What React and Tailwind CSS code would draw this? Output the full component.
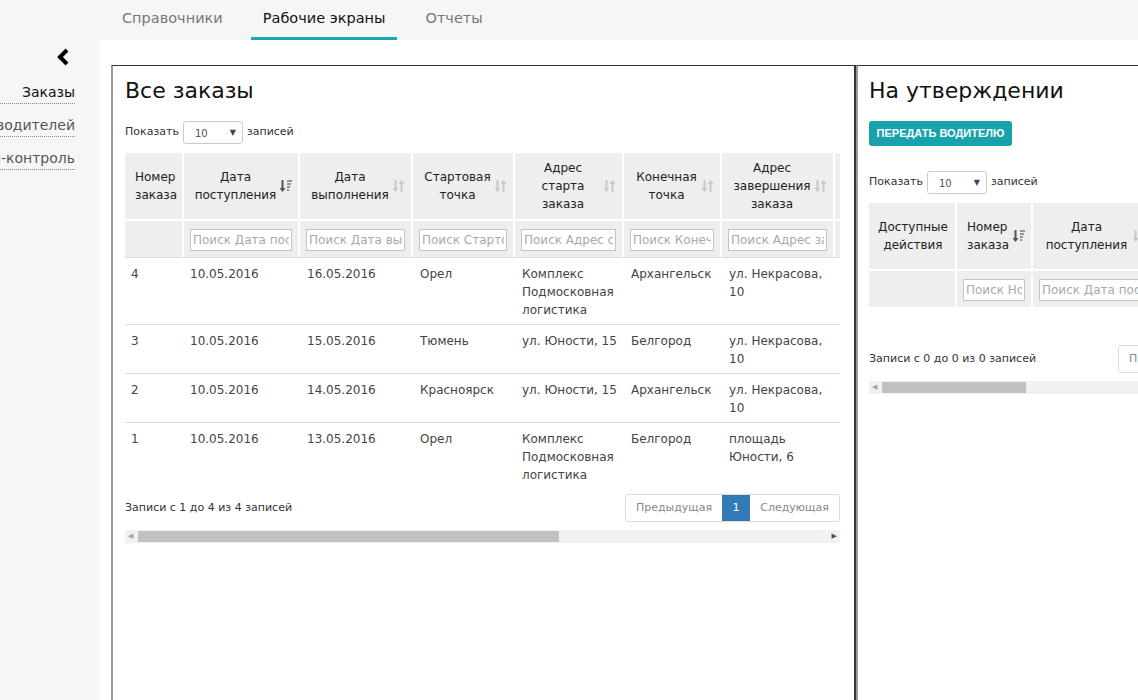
import {useState} from "react";

const SortIcon = ({active}) => {
    if (active) {
        return (
            <svg width="13" height="14" viewBox="0 0 13 14" className="shrink-0">
                <path d="M3.5 1v10.5" stroke="#555" strokeWidth="2"/>
                <path d="M0.5 9l3 4 3-4z" fill="#555"/>
                <path d="M8 2h5M8 5h4M8 8h3M8 11h2" stroke="#777" strokeWidth="1.6"/>
            </svg>
        );
    }
    return (
        <svg width="13" height="14" viewBox="0 0 13 14" className="shrink-0">
            <path d="M3.5 1v10" stroke="#c8c8c8" strokeWidth="2"/>
            <path d="M0.5 9l3 4 3-4z" fill="#c8c8c8"/>
            <path d="M9.5 3v10" stroke="#c8c8c8" strokeWidth="2"/>
            <path d="M6.5 5l3-4 3 4z" fill="#c8c8c8"/>
        </svg>
    );
};

const Select = () => (
    <div className="w-[60px] h-[23px] border border-[#cccccc] rounded-[3px] flex items-center justify-between pl-[11px] pr-[6px] bg-white">
        <span className="text-[10px] text-[#555] mt-[2px]">10</span>
        <span className="text-[8px] text-[#444]">▼</span>
    </div>
);

const ShowRow = () => (
    <div className="flex items-center gap-[4px] text-[11px] text-[#333]">
        <span>Показать</span>
        <Select/>
        <span>записей</span>
    </div>
);

const HeadCell = ({lines, sort, left}) => (
    <th className="bg-[#eeeeee] border-r-2 border-b-2 border-white py-[6px] font-normal text-[12px] leading-[18px] text-[#222] align-middle">
        {left ? (
            <div className="flex items-center pl-[10px] pr-[6px] text-left">
                <span className="flex-1">
                    {lines.map((l) => (
                        <div key={l}>{l}</div>
                    ))}
                </span>
                {sort && <SortIcon active={sort === "active"}/>}
            </div>
        ) : (
            <div className="flex items-center pl-[8px] pr-[6px]">
                <span className="flex-1 text-center">
                    {lines.map((l) => (
                        <div key={l}>{l}</div>
                    ))}
                </span>
                {sort && <SortIcon active={sort === "active"}/>}
            </div>
        )}
    </th>
);

const FilterCell = ({placeholder}) => (
    <th className="bg-[#eeeeee] border-r-2 border-white py-[6px] px-[6px] font-normal">
        {placeholder && (
            <input
                type="text"
                placeholder={placeholder}
                className="w-full h-[22px] border border-[#c4c4c4] bg-white px-[2px] text-[12px] text-[#333] placeholder:text-[#a9a9a9] outline-none"
            />
        )}
    </th>
);

const Scrollbar = ({thumbLeft, thumbWidth}) => (
    <div className="h-[13px] bg-[#f1f1f1] flex items-center relative">
        <span className="absolute left-[3px] text-[7px] text-[#a3a3a3]">◀</span>
        <div className="h-[11px] bg-[#c1c1c1]" style={{marginLeft: thumbLeft, width: thumbWidth}}/>
        <span className="absolute right-[3px] text-[7px] text-[#505050]">▶</span>
    </div>
);

const orders = [
    {id: "4", got: "10.05.2016", done: "16.05.2016", start: "Орел", startAddr: "Комплекс\nПодмосковная\nлогистика", end: "Архангельск", endAddr: "ул. Некрасова,\n10"},
    {id: "3", got: "10.05.2016", done: "15.05.2016", start: "Тюмень", startAddr: "ул. Юности, 15", end: "Белгород", endAddr: "ул. Некрасова,\n10"},
    {id: "2", got: "10.05.2016", done: "14.05.2016", start: "Красноярск", startAddr: "ул. Юности, 15", end: "Архангельск", endAddr: "ул. Некрасова,\n10"},
    {id: "1", got: "10.05.2016", done: "13.05.2016", start: "Орел", startAddr: "Комплекс\nПодмосковная\nлогистика", end: "Белгород", endAddr: "площадь\nЮности, 6"},
];

const Td = ({children, pl}) => (
    <td className={`border-t border-[#dddddd] pt-[7px] pb-[5px] ${pl ? "pl-[6px]" : "pl-[7px]"} pr-[4px] align-top text-[12px] leading-[18px] text-[#444] whitespace-pre-line`}>
        {children}
    </td>
);

const Pager = ({children}) => (
    <div className="flex h-[28px] border border-[#dddddd] rounded-[3px] text-[11px] overflow-hidden">
        {children}
    </div>
);

const AllOrders = () => (
    <div className="w-[745px] shrink-0 h-[700px] border-t border-t-[#333] border-l-2 border-l-[#9a9a9a] border-r-2 border-r-[#333] pt-[12px] pl-[12px] pr-[14px]">
        <h2 className="text-[22px] leading-[26px] text-[#111]">Все заказы</h2>
        <div className="mt-[17px]">
            <ShowRow/>
        </div>
        <div className="mt-[9px] w-[715px] overflow-hidden">
            <table className="table-fixed border-separate border-spacing-0 w-[830px]">
                <colgroup>
                    <col className="w-[59px]"/>
                    <col className="w-[116px]"/>
                    <col className="w-[113px]"/>
                    <col className="w-[102px]"/>
                    <col className="w-[109px]"/>
                    <col className="w-[98px]"/>
                    <col className="w-[113px]"/>
                    <col className="w-[120px]"/>
                </colgroup>
                <thead>
                    <tr>
                        <HeadCell left lines={["Номер", "заказа"]}/>
                        <HeadCell sort="active" lines={["Дата", "поступления"]}/>
                        <HeadCell sort="on" lines={["Дата", "выполнения"]}/>
                        <HeadCell sort="on" lines={["Стартовая", "точка"]}/>
                        <HeadCell sort="on" lines={["Адрес", "старта", "заказа"]}/>
                        <HeadCell sort="on" lines={["Конечная", "точка"]}/>
                        <HeadCell sort="on" lines={["Адрес", "завершения", "заказа"]}/>
                        <HeadCell sort="on" lines={["Статус", "заказа"]}/>
                    </tr>
                    <tr>
                        <FilterCell/>
                        <FilterCell placeholder="Поиск Дата поступления"/>
                        <FilterCell placeholder="Поиск Дата выполнения"/>
                        <FilterCell placeholder="Поиск Стартовая точка"/>
                        <FilterCell placeholder="Поиск Адрес старта заказа"/>
                        <FilterCell placeholder="Поиск Конечная точка"/>
                        <FilterCell placeholder="Поиск Адрес завершения заказа"/>
                        <FilterCell placeholder="Поиск Статус"/>
                    </tr>
                </thead>
                <tbody>
                    {orders.map((o) => (
                        <tr key={o.id}>
                            <Td pl>{o.id}</Td>
                            <Td pl>{o.got}</Td>
                            <Td>{o.done}</Td>
                            <Td>{o.start}</Td>
                            <Td>{o.startAddr}</Td>
                            <Td>{o.end}</Td>
                            <Td>{o.endAddr}</Td>
                            <Td>Новый</Td>
                        </tr>
                    ))}
                </tbody>
            </table>
        </div>
        <div className="mt-[5px] flex items-center justify-between">
            <span className="text-[11px] text-[#333]">Записи с 1 до 4 из 4 записей</span>
            <Pager>
                <span className="w-[96px] flex items-center justify-center text-[#888]">Предыдущая</span>
                <span className="w-[28px] flex items-center justify-center bg-[#337ab7] text-white">1</span>
                <span className="w-[89px] flex items-center justify-center text-[#888]">Следующая</span>
            </Pager>
        </div>
        <div className="mt-[8px]">
            <Scrollbar thumbLeft={13} thumbWidth={421}/>
        </div>
    </div>
);

const Approval = () => (
    <div className="w-[745px] shrink-0 h-[700px] border-t border-t-[#333] border-l-2 border-l-[#9a9a9a] pt-[12px] pl-[11px] pr-[12px]">
        <h2 className="text-[22px] leading-[26px] text-[#111]">На утверждении</h2>
        <button className="mt-[17px] h-[25px] w-[143px] rounded-[3px] bg-[#17a2ad] text-white text-[11px] font-bold font-['Liberation_Sans',sans-serif]">
            ПЕРЕДАТЬ ВОДИТЕЛЮ
        </button>
        <div className="mt-[25px]">
            <ShowRow/>
        </div>
        <div className="mt-[9px] w-[715px] overflow-hidden">
            <table className="table-fixed border-separate border-spacing-0 w-[700px]">
                <colgroup>
                    <col className="w-[88px]"/>
                    <col className="w-[76px]"/>
                    <col className="w-[120px]"/>
                    <col className="w-[113px]"/>
                    <col className="w-[113px]"/>
                    <col className="w-[190px]"/>
                </colgroup>
                <thead>
                    <tr>
                        <HeadCell lines={["Доступные", "действия"]}/>
                        <HeadCell left sort="active" lines={["Номер", "заказа"]}/>
                        <HeadCell sort="on" lines={["Дата", "поступления"]}/>
                        <HeadCell sort="on" lines={["Дата", "выполнения"]}/>
                        <HeadCell sort="on" lines={["Стартовая", "точка"]}/>
                        <HeadCell sort="on" lines={["Адрес", "старта", "заказа"]}/>
                    </tr>
                    <tr>
                        <FilterCell/>
                        <FilterCell placeholder="Поиск Номер заказа"/>
                        <FilterCell placeholder="Поиск Дата поступления"/>
                        <FilterCell placeholder="Поиск Дата выполнения"/>
                        <FilterCell placeholder="Поиск Стартовая точка"/>
                        <FilterCell placeholder="Поиск Адрес старта заказа"/>
                    </tr>
                </thead>
            </table>
        </div>
        <div className="mt-[38px] flex items-center gap-[17px] w-[715px]">
            <span className="text-[11px] text-[#333] w-[232px]">Записи с 0 до 0 из 0 записей</span>
            <Pager>
                <span className="w-[96px] flex items-center pl-[10px] text-[#888]">Предыдущая</span>
                <span className="w-[89px] flex items-center justify-center text-[#888]">Следующая</span>
            </Pager>
        </div>
        <div className="mt-[8px] w-[715px]">
            <Scrollbar thumbLeft={13} thumbWidth={144}/>
        </div>
    </div>
);

const Sidebar = () => {
    const items = [
        {label: "Заказы", active: true},
        {label: "Заявки водителей"},
        {label: "ГСМ-контроль"},
    ];
    return (
        <aside className="w-[100px] shrink-0 bg-[#f6f6f6] overflow-hidden pr-[25px] flex flex-col items-end">
            <svg width="16" height="18" viewBox="0 0 16 18" className="mt-[8px] mr-[4px]">
                <polyline points="12,2 5,9 12,16" fill="none" stroke="#000" strokeWidth="4"/>
            </svg>
            <div className="mt-[16px] w-full flex flex-col items-end gap-[11px]">
                {items.map((it) => (
                    <div
                        key={it.label}
                        className={`w-full flex justify-end whitespace-nowrap text-[14px] leading-[20px] border-b border-dotted border-[#8a8a8a] pb-[1px] ${it.active ? "text-[#111]" : "text-[#555]"}`}
                    >
                        {it.label}
                    </div>
                ))}
            </div>
        </aside>
    );
};

export default function App() {
    const [tab] = useState("Рабочие экраны");
    const tabs = ["Справочники", "Рабочие экраны", "Отчеты"];
    return (
        <div className="w-[1138px] h-[700px] overflow-hidden bg-white flex flex-col font-['DejaVu_Sans',sans-serif]">
            <nav className="h-[40px] shrink-0 bg-[#f6f6f6] flex pl-[110px] gap-[16px]">
                {tabs.map((t) => (
                    <div
                        key={t}
                        className={`px-[12px] flex items-center text-[14.5px] pt-[1px] border-b-[3px] ${t === tab ? "border-[#17a6b3] text-[#111]" : "border-transparent text-[#777]"}`}
                    >
                        {t}
                    </div>
                ))}
            </nav>
            <div className="flex flex-1 min-h-0">
                <Sidebar/>
                <main className="flex-1 overflow-hidden pt-[25px] pl-[11px] flex items-start">
                    <AllOrders/>
                    <Approval/>
                </main>
            </div>
        </div>
    );
}
